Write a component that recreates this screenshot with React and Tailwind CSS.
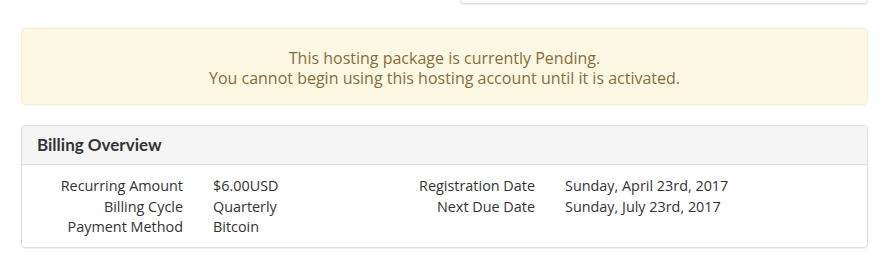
export default function App() {
  const sans = { fontFamily: '"Open Sans", "Liberation Sans", sans-serif' };
  return (
    <div className="w-[885px] h-[269px] bg-white overflow-hidden" style={sans}>
      <div className="flex justify-end pr-[17px]">
        <div className="w-[408px] h-[8px] -mt-[4px] bg-white border border-[#dddddd] rounded-[4px] shadow-[0_1px_2px_rgba(0,0,0,0.08)]"></div>
      </div>
      <div className="ml-[21px] mr-[17px] mt-[24px] h-[77px] rounded-[4px] border border-[#faebcc] bg-[#fcf8e3] text-[#8a6d3b] text-[16px] leading-[20px] flex flex-col items-center justify-center pt-[2px]">
        <div>This hosting package is currently Pending.</div>
        <div>You cannot begin using this hosting account until it is activated.</div>
      </div>
      <div className="ml-[21px] mr-[17px] mt-[20px] h-[123px] rounded-[4px] border border-[#dddddd] bg-white shadow-[0_1px_1px_rgba(0,0,0,0.05)] overflow-hidden">
        <div className="h-[39px] bg-[#f5f5f5] border-b border-[#dddddd] flex items-center px-[15px]">
          <h3 className="text-[17px] font-bold text-[#333333]" style={{ fontFamily: 'Lato, "Open Sans", sans-serif' }}>Billing Overview</h3>
        </div>
        <div className="flex pt-[11px] text-[14.4px] leading-[20.5px] text-[#333333]">
          <div className="w-[383px] flex gap-[30px]">
            <div className="w-[161px] text-right whitespace-nowrap">
              <div>Recurring Amount</div>
              <div>Billing Cycle</div>
              <div>Payment Method</div>
            </div>
            <div className="whitespace-nowrap">
              <div>$6.00USD</div>
              <div>Quarterly</div>
              <div>Bitcoin</div>
            </div>
          </div>
          <div className="flex gap-[30px]">
            <div className="w-[130px] text-right whitespace-nowrap">
              <div>Registration Date</div>
              <div>Next Due Date</div>
            </div>
            <div className="whitespace-nowrap">
              <div>Sunday, April 23rd, 2017</div>
              <div>Sunday, July 23rd, 2017</div>
            </div>
          </div>
        </div>
      </div>
    </div>
  );
}
